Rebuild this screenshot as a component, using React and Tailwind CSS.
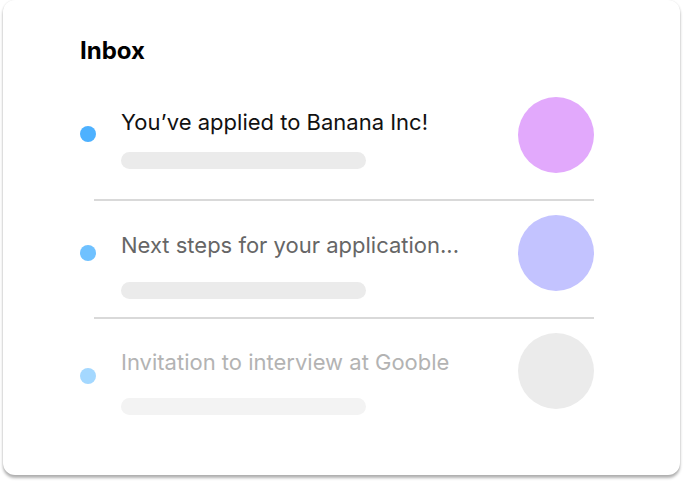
const rows = [
  {
    title: "You’ve applied to Banana Inc!",
    dot: "bg-[#4db1ff]",
    text: "text-[#111111]",
    bar: "bg-[#ebebeb]",
    avatar: "bg-[#e2a9fc]",
    dotTop: "mt-[29px]",
    textTop: "mt-[11px]",
    barTop: "mt-[16px]",
  },
  {
    title: "Next steps for your application...",
    dot: "bg-[#6fc1ff]",
    text: "text-[#666666]",
    bar: "bg-[#ebebeb]",
    avatar: "bg-[#c3c3ff]",
    dotTop: "mt-[30px]",
    textTop: "mt-[16px]",
    barTop: "mt-[23px]",
  },
  {
    title: "Invitation to interview at Gooble",
    dot: "bg-[#a4d8ff]",
    text: "text-[#b3b3b3]",
    bar: "bg-[#f3f3f3]",
    avatar: "bg-[#ebebeb]",
    dotTop: "mt-[35px]",
    textTop: "mt-[15px]",
    barTop: "mt-[22px]",
  },
];

function Row({ row }) {
  return (
    <div className="flex items-start h-[76px]">
      <div className={`w-4 h-4 rounded-full shrink-0 ${row.dot} ${row.dotTop}`} />
      <div className={`ml-[25px] flex flex-col ${row.textTop}`}>
        <p className={`text-[22px] leading-[28px] whitespace-nowrap ${row.text}`}>{row.title}</p>
        <div className={`w-[245px] h-[17px] rounded-full ${row.bar} ${row.barTop}`} />
      </div>
      <div className={`ml-auto w-[76px] h-[76px] rounded-full shrink-0 ${row.avatar}`} />
    </div>
  );
}

export default function App() {
  return (
    <div className="w-[683px] h-[484px] bg-white font-['Inter',sans-serif]">
      <div className="ml-[3px] w-[677px] h-[475px] bg-white rounded-xl shadow-[0_3px_3px_rgba(0,0,0,0.3),0_0_2px_rgba(0,0,0,0.1)] pl-[77px] pr-[86px] pt-[37px]">
        <h1 className="text-[24px] leading-[28px] font-bold text-black">Inbox</h1>
        <div className="mt-[32px]">
          <Row row={rows[0]} />
          <div className="ml-[14px] mt-[26px] h-[2px] bg-[#d9d9d9]" />
          <div className="mt-[14px]">
            <Row row={rows[1]} />
          </div>
          <div className="ml-[14px] mt-[26px] h-[2px] bg-[#d9d9d9]" />
          <div className="mt-[14px]">
            <Row row={rows[2]} />
          </div>
        </div>
      </div>
    </div>
  );
}
